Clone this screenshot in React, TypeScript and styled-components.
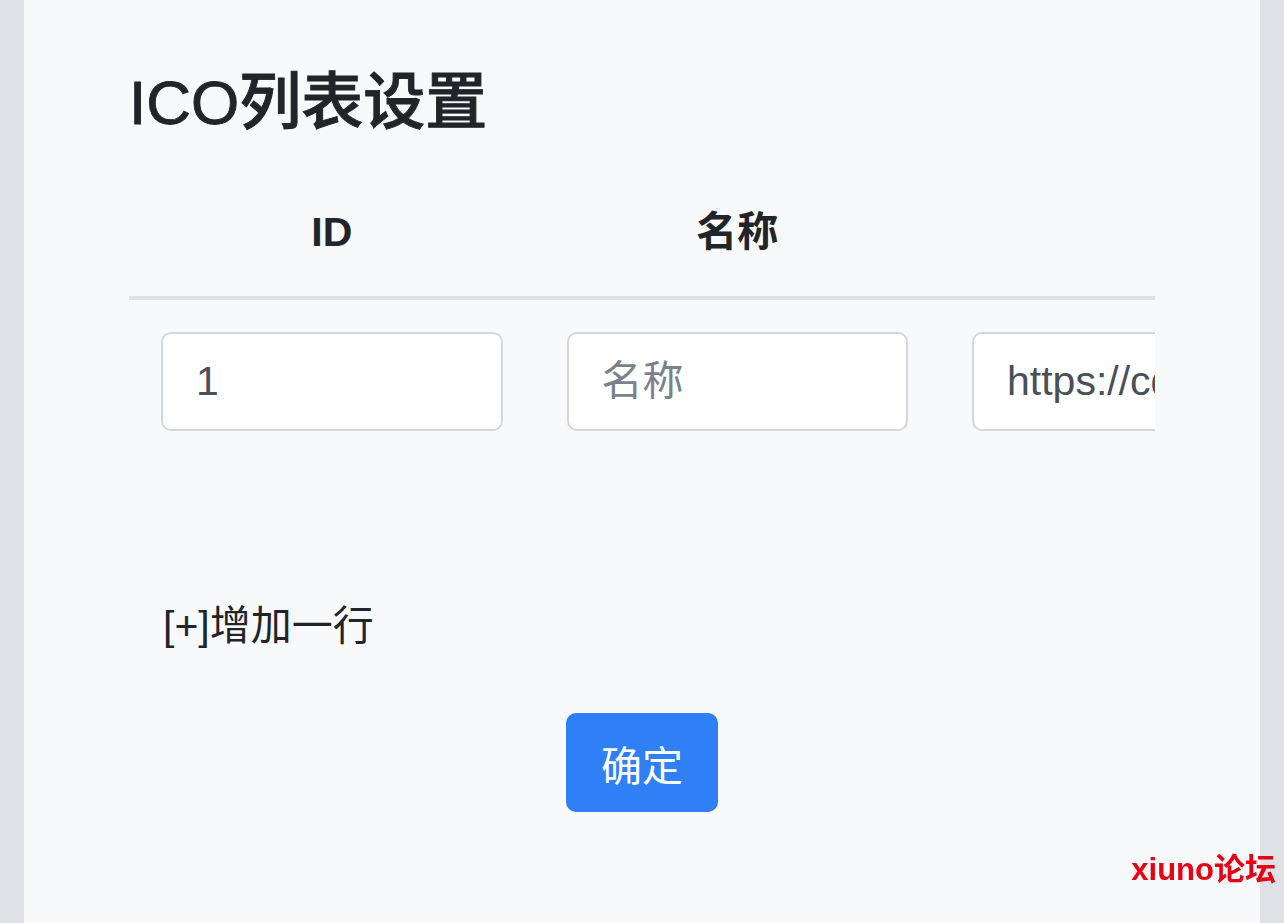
import React from "react";
import styled, { createGlobalStyle } from "styled-components";

const GlobalStyle = createGlobalStyle`
  html, body { margin: 0; padding: 0; }
  body {
    background: #dee2e6;
    font-family: "Liberation Sans", "Noto Sans CJK SC", sans-serif;
    color: #212529;
  }
  * { box-sizing: border-box; }
`;

const Card = styled.main`
  position: relative;
  margin: 0 24px;
  min-height: 923px;
  background: #f8f9fa;
  padding: 66px 105px 0 105px;
  overflow: hidden;
`;

const Title = styled.h2`
  margin: 0;
  font-size: 62px;
  line-height: 74px;
  font-weight: 500;
  color: #212529;
  -webkit-text-stroke: 0.9px #212529;
`;

const TableWrap = styled.div`
  margin-top: 30px;
  width: 1026px;
  overflow: hidden;
`;

const Table = styled.table`
  border-collapse: collapse;
  table-layout: fixed;
  width: 1600px;
`;

const Th = styled.th<{ $w: number }>`
  width: ${(p) => p.$w}px;
  padding: 32px;
  font-size: 41px;
  line-height: 61.5px;
  font-weight: 700;
  text-align: center;
  color: #212529;
  border-bottom: 4px solid #dee2e6;
`;

const Td = styled.td`
  padding: 32px;
`;

const Input = styled.input`
  display: block;
  width: 100%;
  height: 99px;
  padding: 0 33px;
  font-family: "Liberation Sans", "Noto Sans CJK SC", sans-serif;
  font-size: 41px;
  color: #495057;
  background: #fff;
  border: 2.5px solid #d3d7dc;
  border-radius: 10px;
  outline: none;
  &::placeholder { color: #7b8188; }
`;

const AddRow = styled.div`
  margin: 133px 0 0 34px;
  font-size: 41px;
  line-height: 61.5px;
  color: #212529;
`;

const Actions = styled.div`
  display: flex;
  justify-content: center;
  margin: 56px -105px 0 -105px;
`;

const Button = styled.button`
  width: 152px;
  height: 99px;
  border: none;
  border-radius: 10px;
  background: #2f7ff6;
  color: #fff;
  font-family: "Liberation Sans", "Noto Sans CJK SC", sans-serif;
  font-size: 41px;
  padding: 0;
`;

const Watermark = styled.div`
  position: fixed;
  right: 8px;
  top: 850px;
  font-family: "Liberation Sans", "Noto Sans CJK SC", sans-serif;
  font-size: 31px;
  font-weight: 700;
  color: #e60012;
  line-height: 40px;
`;

export default function App() {
  return (
    <>
      <GlobalStyle />
      <Card>
        <Title>ICO列表设置</Title>
        <TableWrap>
          <Table>
            <thead>
              <tr>
                <Th $w={405.5}>ID</Th>
                <Th $w={405.5}>名称</Th>
                <Th $w={789}></Th>
              </tr>
            </thead>
            <tbody>
              <tr>
                <Td><Input defaultValue="1" /></Td>
                <Td><Input placeholder="名称" /></Td>
                <Td><Input defaultValue="https://cdn.example.com/ico/1.png" /></Td>
              </tr>
            </tbody>
          </Table>
        </TableWrap>
        <AddRow>[+]增加一行</AddRow>
        <Actions>
          <Button>确定</Button>
        </Actions>
      </Card>
      <Watermark>xiuno论坛</Watermark>
    </>
  );
}
